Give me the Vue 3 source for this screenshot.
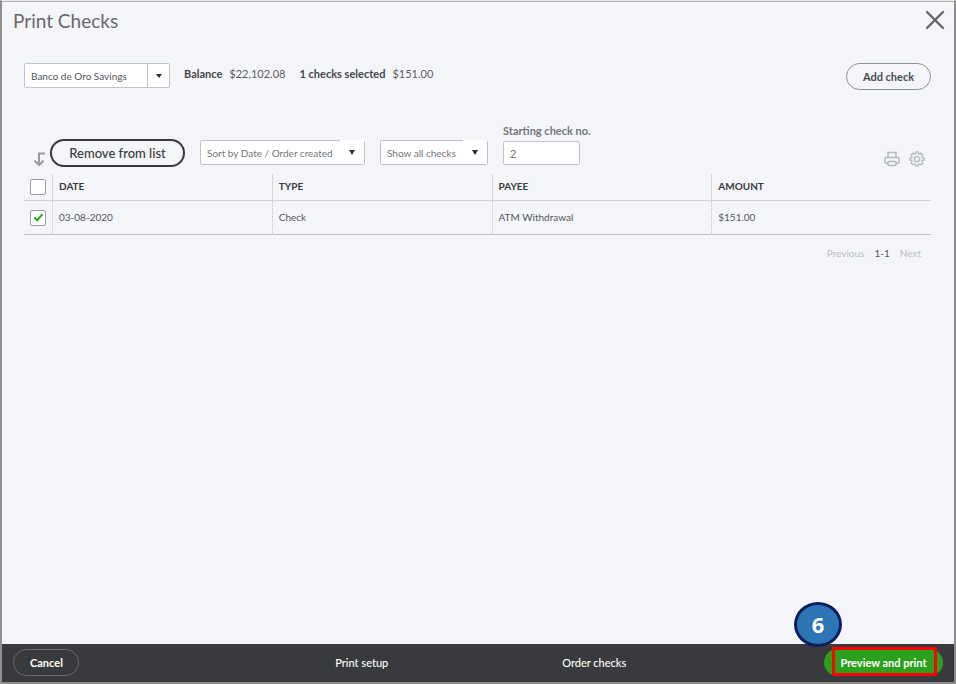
<script setup>
import { ref } from 'vue'

const account = ref('Banco de Oro Savings')
const sort = ref('Sort by Date / Order created')
const filter = ref('Show all checks')
const startNo = ref('2')
const allSelected = ref(false)
const checks = ref([
  { date: '03-08-2020', type: 'Check', payee: 'ATM Withdrawal', amount: '$151.00', selected: true },
])
</script>

<template>
  <div class="page">
    <header class="title-bar">
      <h1>Print Checks</h1>
      <button class="icon-button" aria-label="Close">
        <svg width="20" height="20" viewBox="0 0 20 20">
          <path d="M2 2 18 18M18 2 2 18" fill="none" stroke="#636467" stroke-width="2.4" stroke-linecap="round" />
        </svg>
      </button>
    </header>

    <main class="content">
      <section class="summary">
        <div class="picker account">
          <select v-model="account" aria-label="Account">
            <option>Banco de Oro Savings</option>
          </select>
          <span class="caret"><i class="arrow"></i></span>
        </div>
        <p class="figures">
          <strong>Balance</strong><span class="balance">$22,102.08</span>
          <strong>1 checks selected</strong><span>$151.00</span>
        </p>
        <button class="pill add">Add check</button>
      </section>

      <section class="toolbar">
        <svg class="batch-arrow" width="13" height="15" viewBox="0 0 13 15" aria-hidden="true">
          <path d="M12 1.500H6V12.500M1.500 8.500 6 13l4.500-4.500" fill="none" stroke="#98999d" stroke-width="2" />
        </svg>
        <button class="pill remove">Remove from list</button>
        <div class="picker sort">
          <select v-model="sort" aria-label="Sort order">
            <option>Sort by Date / Order created</option>
          </select>
          <span class="caret"><i class="arrow"></i></span>
        </div>
        <div class="picker filter">
          <select v-model="filter" aria-label="Check filter">
            <option>Show all checks</option>
          </select>
          <span class="caret"><i class="arrow"></i></span>
        </div>
        <div class="field">
          <label for="start-no">Starting check no.</label>
          <input id="start-no" v-model="startNo" type="text" />
        </div>
        <div class="tools">
          <button class="icon-button" aria-label="Print list">
            <svg width="16" height="16" viewBox="0 0 16 16" fill="none" stroke="#b5b7bf" stroke-width="1.500">
              <path d="M4 6V1.500h8V6" />
              <path d="M4 12.500H2.500A1.500 1.500 0 0 1 1 11V8a1.500 1.500 0 0 1 1.500-1.500h11A1.500 1.500 0 0 1 15 8v3a1.500 1.500 0 0 1-1.500 1.500H12" />
              <rect x="4" y="10.500" width="8" height="4" rx="1" />
            </svg>
          </button>
          <button class="icon-button" aria-label="List settings">
            <svg width="16" height="16" viewBox="0 0 16 16" fill="none" stroke="#b5b7bf" stroke-width="1.300" stroke-linejoin="round">
              <path d="M6.700 2.600 7 .9h2l.3 1.700 1.300.5L12 2.100 13.900 4l-1 1.400.5 1.300 1.700.3v2l-1.700.3-.5 1.300 1 1.400L12 13.900l-1.400-1-1.300.5L9 15.100H7l-.3-1.700-1.300-.5-1.400 1L2.100 12l1-1.400-.5-1.300L.9 9V7l1.700-.3.5-1.300-1-1.400L4 2.100l1.400 1z" />
              <circle cx="8" cy="8" r="2.700" />
            </svg>
          </button>
        </div>
      </section>

      <table class="checks">
        <thead>
          <tr>
            <th class="tick"><input v-model="allSelected" type="checkbox" aria-label="Select all checks" /></th>
            <th>DATE</th>
            <th>TYPE</th>
            <th>PAYEE</th>
            <th>AMOUNT</th>
          </tr>
        </thead>
        <tbody>
          <tr v-for="check in checks" :key="check.date">
            <td class="tick"><input v-model="check.selected" type="checkbox" aria-label="Select check" /></td>
            <td>{{ check.date }}</td>
            <td>{{ check.type }}</td>
            <td>{{ check.payee }}</td>
            <td>{{ check.amount }}</td>
          </tr>
        </tbody>
      </table>

      <nav class="pager" aria-label="Pages">
        <a href="#">Previous</a>
        <span>1-1</span>
        <a href="#">Next</a>
      </nav>
    </main>

    <footer class="action-bar">
      <div><button class="pill cancel">Cancel</button></div>
      <a href="#">Print setup</a>
      <a href="#">Order checks</a>
      <div class="primary">
        <button class="pill print">Preview and print</button>
        <span class="highlight"></span>
        <span class="step">6</span>
      </div>
    </footer>
  </div>
</template>

<style>
body {
  background: #f4f5f9;
}
</style>

<style scoped>
.page {
  box-sizing: border-box;
  min-height: 100vh;
  display: flex;
  flex-direction: column;
  border: 2px solid #8d8e8e;
  border-top: 1px solid #e9eae9;
  background: #f4f5f9;
  color: #55565a;
  font-family: Lato, "Liberation Sans", sans-serif;
  font-size: 11px;
}

button,
input,
select {
  font: inherit;
  color: inherit;
  margin: 0;
  box-sizing: border-box;
}

a {
  color: inherit;
  text-decoration: none;
}

.title-bar {
  display: flex;
  justify-content: space-between;
  align-items: center;
  height: 36px;
  padding: 0 9px 0 11px;
  border-top: 1px solid #b4b5b5;
}

h1 {
  margin: 0;
  font-size: 19px;
  font-weight: 400;
  color: #68696d;
}

.icon-button {
  display: flex;
  padding: 0;
  border: 0;
  background: none;
}

.content {
  flex: 1;
  padding: 25px 23px 0 22px;
}

.summary {
  display: flex;
  align-items: flex-start;
}

.pill {
  border: 1px solid #8d9096;
  border-radius: 14px;
  height: 27px;
  padding: 0 16px;
  background: transparent;
  white-space: nowrap;
}

.picker {
  display: flex;
  box-sizing: border-box;
  height: 25px;
  border: 1px solid #c1c3cb;
  border-radius: 2px;
  background: #fff;
  position: relative;
}

.picker select {
  flex: 1;
  min-width: 0;
  padding: 0 24px 0 6px;
  border: 0;
  background: none;
  appearance: none;
  font-size: 10px;
}

.caret {
  position: absolute;
  top: 0;
  right: 0;
  bottom: 0;
  width: 24px;
  display: flex;
  align-items: center;
  justify-content: center;
  pointer-events: none;
}

.arrow {
  border: 3px solid transparent;
  border-top: 5px solid #2b2c30;
  border-bottom: 0;
}

.account {
  width: 146px;
}

.account .caret {
  width: 21px;
  border-left: 1px solid #c1c3cb;
}

.account .arrow {
  border-top-width: 4px;
}

.figures {
  display: flex;
  gap: 7px;
  margin: 0 auto 0 14px;
  line-height: 22px;
  color: #5c5d61;
}

.figures strong {
  color: #46474b;
}

.balance {
  margin-right: 7px;
}

.add {
  width: 85px;
  padding: 0;
  font-weight: 700;
  color: #4a4b4f;
}

.toolbar {
  display: flex;
  align-items: flex-end;
  margin-top: 34px;
  padding-left: 9px;
}

.batch-arrow {
  margin-right: 4px;
}

.remove {
  width: 135px;
  height: 28px;
  border: 2px solid #393a3d;
  font-size: 13px;
  font-weight: 500;
  color: #393a3d;
}

.sort {
  width: 165px;
  margin-left: 15px;
  color: #74757a;
}

.filter {
  width: 108px;
  margin: 0 15px;
  color: #74757a;
}

.sort .caret,
.filter .caret {
  top: -1px;
  bottom: 0;
  background: #fff;
}

.toolbar .picker,
.field {
  margin-bottom: 2px;
}

.field {
  display: flex;
  flex-direction: column;
  gap: 3px;
}

.field label {
  font-weight: 700;
  line-height: 14px;
  color: #74757a;
}

.field input {
  width: 77px;
  height: 24px;
  padding: 0 6px;
  border: 1px solid #c1c3cb;
  border-radius: 2px;
  background: #fff;
  color: #74757a;
}

.tools {
  display: flex;
  gap: 9px;
  margin-left: auto;
  padding-right: 6px;
}

.checks {
  width: 100%;
  margin-top: 7px;
  border-collapse: separate;
  border-spacing: 0;
  table-layout: fixed;
}

th,
td {
  padding: 0 6px 2px;
  text-align: left;
  border-bottom: 1px solid #cfd1d5;
}

th {
  height: 24px;
  font-size: 10px;
  font-weight: 700;
  color: #393a3d;
}

td {
  height: 31px;
  font-size: 10px;
}

tbody tr:last-child td {
  border-bottom: 1px solid #bfc1c5;
}

th + th {
  border-left: 1px solid #d3d5d9;
}

td + td {
  border-left: 1px dotted #bfc1c7;
}

th.tick,
td.tick {
  width: 28px;
  padding: 0;
}

.tick input {
  display: block;
  width: 16px;
  height: 16px;
  margin-left: 6px;
  border: 1px solid #9a9ca2;
  border-radius: 2px;
  background: #fff;
  appearance: none;
}

.tick input:checked {
  position: relative;
}

.tick input:checked::after {
  content: "";
  position: absolute;
  left: 5px;
  top: 1px;
  width: 3px;
  height: 7px;
  border: solid #2ca01c;
  border-width: 0 2px 2px 0;
  transform: rotate(42deg);
}

.pager {
  display: flex;
  justify-content: flex-end;
  gap: 10px;
  padding: 12px 10px 0;
  font-size: 10px;
}

.pager a {
  color: #b9bbc1;
}

.action-bar {
  box-sizing: border-box;
  display: grid;
  grid-template-columns: 1fr 1fr 1fr 1fr;
  align-items: center;
  justify-items: center;
  height: 38px;
  padding: 0 11px 2px;
  background: #393a3d;
  color: #fff;
  font-weight: 500;
}

.action-bar > :first-child {
  justify-self: start;
}

.cancel {
  width: 66px;
  border-color: #6b6c72;
  font-weight: 700;
}

.primary {
  position: relative;
  justify-self: end;
}

.print {
  width: 119px;
  border: 0;
  padding: 0;
  background: #2ca01c;
  font-weight: 700;
}

.highlight {
  position: absolute;
  inset: -2px 6px 0 8px;
  border: 3px solid #f00;
  pointer-events: none;
}

.step {
  position: absolute;
  left: -30px;
  bottom: 29px;
  box-sizing: border-box;
  width: 48px;
  height: 45px;
  display: flex;
  align-items: center;
  justify-content: center;
  border: 3px solid #0b1f5c;
  border-radius: 50%;
  background: #2e75b6;
  font-family: "Open Sans", sans-serif;
  font-size: 22px;
  font-weight: 700;
}
</style>
